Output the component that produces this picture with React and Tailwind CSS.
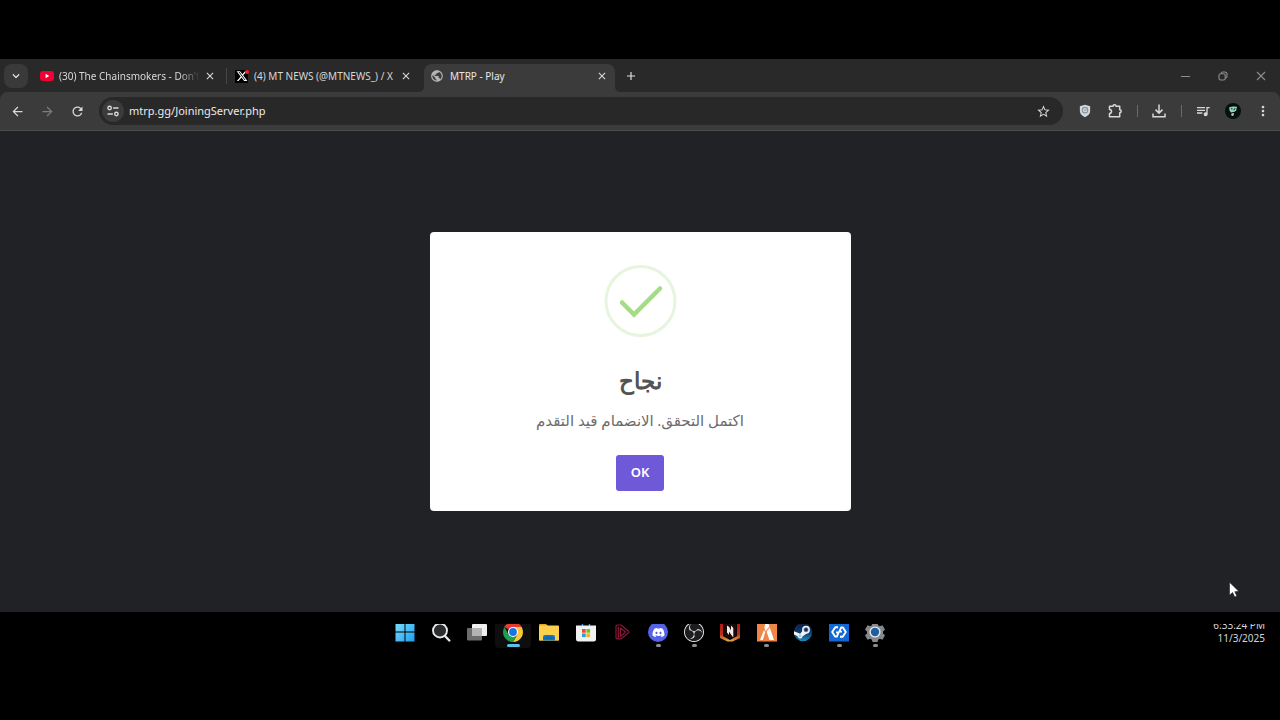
import React, { useState } from "react";
import {
  MdArrowBack,
  MdArrowForward,
  MdRefresh,
  MdStarBorder,
  MdQueueMusic,
  MdMoreVert,
  MdKeyboardArrowDown,
  MdClose,
  MdAdd,
  MdPublic,
} from "react-icons/md";
import { FaXTwitter, FaDiscord } from "react-icons/fa6";
import { SiObsstudio } from "react-icons/si";

// ---------- favicons and toolbar drawings ----------

const YoutubeIcon = () => (
  <svg viewBox="0 0 14 10" className="w-[14px] h-[10px] shrink-0">
    <rect width="14" height="10" rx="3" fill="#f00033" />
    <path d="M5.6 2.8 9.3 5 5.6 7.2z" fill="#fff" />
  </svg>
);

const XIcon = () => (
  <span className="relative flex h-[13px] w-[13px] shrink-0 items-center justify-center bg-black text-white">
    <FaXTwitter size={12} />
    <span className="absolute -right-px top-0 h-1 w-1 rounded-full bg-[#f4212e]" />
  </span>
);

const TuneIcon = () => (
  <svg viewBox="0 0 14 14" className="w-[14px] h-[14px]" fill="none" stroke="#d8d8d8" strokeWidth="1.4" strokeLinecap="round">
    <circle cx="3.6" cy="4" r="1.7" />
    <path d="M7.6 4h4.4M2 10h4.4" />
    <circle cx="10.4" cy="10" r="1.7" />
  </svg>
);

const ShieldIcon = () => (
  <svg viewBox="0 0 14 16" className="w-[12px] h-[14px]">
    <path d="M7 .8 13 2.5v5.3c0 3.6-2.6 6-6 7.6-3.4-1.6-6-4-6-7.6V2.5z" fill="#d3d8de" />
    <circle cx="7" cy="7" r="3.2" fill="none" stroke="#8793a0" strokeWidth="1.3" />
    <path d="M5.6 7h2.8M7.4 5.6 8.6 7" stroke="#8793a0" strokeWidth="1" fill="none" />
  </svg>
);

const PuzzleIcon = () => (
  <svg viewBox="0 0 16 16" className="w-4 h-4" fill="none" stroke="currentColor" strokeWidth="1.5" strokeLinejoin="round">
    <path d="M2.500 3.300H6C6 1.300 9 1.300 9 3.300H12.700V6.800C14.700 6.800 14.700 9.800 12.700 9.800V13.700H2.500V10.400C5.200 10.200 5.200 6.700 2.500 6.500z" />
  </svg>
);

const DownloadIcon = () => (
  <svg viewBox="0 0 14 14" className="h-[14px] w-[14px]" fill="none" stroke="currentColor" strokeWidth="1.5">
    <path d="M7 .5v8.500M3.500 5.600 7 9.100l3.500-3.500M1 9.500v3.300h12V9.500" />
  </svg>
);

const AvatarIcon = () => (
  <svg viewBox="0 0 16 16" className="w-4 h-4">
    <circle cx="8" cy="8" r="8" fill="#07100f" />
    <path d="M4.2 4.2 8 3.6l4 .2-.8 3.4-1.6 1.6-3.6.6-1.4-2z" fill="#8fd8c4" />
    <path d="M6.2 10.8 9 10l-.6 2.8H6.6z" fill="#b9e6da" />
    <path d="M6 5.8h1.6M8.800 7.200l1.400-2" stroke="#07100f" strokeWidth="1" />
  </svg>
);

const RestoreIcon = () => (
  <svg viewBox="0 0 10 10" className="w-[10px] h-[10px]" fill="none" stroke="#8e8e8e" strokeWidth="1.1">
    <rect x="1" y="2.8" width="6.2" height="6.2" rx="1.6" />
    <path d="M3 2.6C3.1 1.500 3.800 1 4.800 1H6.800C8.200 1 9 1.800 9 3.200V5.200C9 6.200 8.500 6.900 7.500 7" />
  </svg>
);

const Cursor = () => (
  <svg viewBox="0 0 12 18" className="absolute right-10 bottom-[13px] w-[12px] h-[18px]">
    <path d="M1.500 1.200V14.200L4.600 11.500 6.700 16 8.800 15 6.800 10.700 10.700 10.300z" fill="#fff" stroke="#222" strokeWidth=".6" />
  </svg>
);

// ---------- taskbar drawings, all on a 20x20 box ----------

const StartIcon = () => (
  <svg viewBox="0 0 20 20" className="w-5 h-5">
    <defs>
      <linearGradient id="start" x1="0" y1="0" x2="1" y2="1">
        <stop offset="0" stopColor="#7fdcfb" />
        <stop offset="1" stopColor="#1d9ff0" />
      </linearGradient>
    </defs>
    <path d="M.5.500h9v9h-9zM10.500.500h9v9h-9zM.500 10.500h9v9h-9zM10.500 10.500h9v9h-9z" fill="url(#start)" />
  </svg>
);

const SearchIcon = () => (
  <svg viewBox="0 0 20 20" className="w-5 h-5">
    <circle cx="9" cy="8.500" r="7" fill="#2b2d30" stroke="#e8e8e8" strokeWidth="1.900" />
    <path d="M14 14l4.300 4.500" stroke="#e8e8e8" strokeWidth="2.400" strokeLinecap="round" />
  </svg>
);

const TaskViewIcon = () => (
  <svg viewBox="0 0 20 20" className="w-5 h-5">
    <rect x="0" y="6" width="15" height="12.500" rx="1" fill="#6d6d6d" />
    <rect x="5" y="2" width="15" height="12" rx="1" fill="#f0f0f0" />
    <rect x="5" y="6" width="10" height="8" fill="#b4b4b4" />
  </svg>
);

const ChromeIcon = () => (
  <svg viewBox="0 0 20 20" className="w-5 h-5">
    <path d="M10 10 1.340 5A10 10 0 0 1 18.660 5z" fill="#e33b2e" />
    <path d="M10 10V5h8.660A10 10 0 0 1 10 20l4.330-7.500z" fill="#fcc934" />
    <path d="M10 10l4.330 2.500L10 20A10 10 0 0 1 1.340 5l4.330 7.500z" fill="#1e9e50" />
    <circle cx="10" cy="10" r="5" fill="#fff" />
    <circle cx="10" cy="10" r="3.900" fill="#1a73e8" />
  </svg>
);

const ExplorerIcon = () => (
  <svg viewBox="0 0 20 20" className="w-5 h-5">
    <path d="M0 3q0-1 1-1h6l2 2h10q1 0 1 1v13.500H0z" fill="#e8a818" />
    <rect x="0" y="3.500" width="20" height="15" rx="1" fill="#fbd04c" />
    <path d="M4 18.500V15q0-2 2-2h8q2 0 2 2v3.500z" fill="#1274c4" />
    <rect x="6" y="15.500" width="8" height="1" fill="#0c5a9c" />
  </svg>
);

const StoreIcon = () => (
  <svg viewBox="0 0 20 20" className="w-5 h-5">
    <path d="M6.500 4.500V2q0-1.200 1.200-1.200h4.600q1.200 0 1.200 1.200v2.500" fill="none" stroke="#2aa7e8" strokeWidth="1.400" />
    <path d="M0 3.500h20V17q0 2.500-2.500 2.500h-15Q0 19.500 0 17z" fill="#f1f1f1" />
    <path d="M6 7h3.700v3.700H6z" fill="#e8502c" />
    <path d="M10.400 7h3.700v3.700h-3.700z" fill="#7db928" />
    <path d="M6 11.400h3.700v3.700H6z" fill="#2a9fe5" />
    <path d="M10.400 11.400h3.700v3.700h-3.700z" fill="#f8b61c" />
  </svg>
);

const PlayerIcon = () => (
  <svg viewBox="0 0 20 20" className="w-5 h-5" fill="none" stroke="#8c1838" strokeWidth="1.200" strokeLinejoin="round">
    <path d="M4 4q0-1 1-1h4l7.200 6q1 1 0 2L9 16.800H5q-1 0-1-1z" />
    <path d="M6.300 16.500V4.500M8.400 6v8.500l5.200-4.500z" />
  </svg>
);

const DiscordIcon = () => (
  <span className="flex h-5 w-5 items-center justify-center rounded-full bg-[#5462e8] text-white">
    <FaDiscord size={13} />
  </span>
);

const ObsIcon = () => (
  <span className="flex h-5 w-5 items-center justify-center rounded-full bg-[#1d1d1f] text-[#e6e6e6]">
    <SiObsstudio size={20} />
  </span>
);

const NovaIcon = () => (
  <svg viewBox="0 0 20 20" className="w-5 h-5">
    <defs>
      <linearGradient id="nova" x1="0" y1="0" x2="0" y2="1">
        <stop offset="0" stopColor="#b3161b" />
        <stop offset=".6" stopColor="#b8321c" />
        <stop offset="1" stopColor="#e2b04a" />
      </linearGradient>
    </defs>
    <path d="M0 2h3v12l7 4 7-4V2h3v14L12.500 19.500h-5L0 16z" fill="url(#nova)" />
    <path d="M3.500 2h13v11.500L10 17l-6.500-3.500z" fill="#1b0809" />
    <path d="M7 3.500 9.200 5l1.800 3.500V3.500L13.300 6v9.500L11 12.500 9 9.500V13L7 10.500z" fill="#f2eeee" />
  </svg>
);

const FivemIcon = () => (
  <svg viewBox="0 0 20 20" className="w-5 h-5">
    <rect y="1" width="20" height="18.500" fill="#f08548" />
    <path d="M8.200 2h3.400l.8 2.400-3.900 4.800-1.100-4z" fill="#fff" />
    <path d="M7 8 8.200 10.500 5.800 18H3z" fill="#fff" />
    <path d="M9.600 9.400 12.800 5.500 17 18h-4.600z" fill="#fff" />
  </svg>
);

const SteamIcon = () => (
  <svg viewBox="0 0 20 20" className="w-5 h-5">
    <defs>
      <linearGradient id="steam" x1="0" y1="0" x2="0" y2="1">
        <stop offset="0" stopColor="#101a38" />
        <stop offset=".55" stopColor="#0d3f6e" />
        <stop offset="1" stopColor="#1a8fc4" />
      </linearGradient>
    </defs>
    <circle cx="10" cy="10" r="9.200" fill="url(#steam)" />
    <path d="M1 9.200 7.200 11.800 10 8.200 14.500 11 9.700 14.200Q8.800 17 6.300 16.200 4.600 15.500 4.400 14L1 12.500z" fill="#f2f5f8" />
    <circle cx="13" cy="7.700" r="3.900" fill="#f2f5f8" />
    <circle cx="13" cy="7.700" r="2.200" fill="#14335c" stroke="#8aa0b5" strokeWidth=".6" />
    <circle cx="7" cy="13.700" r="1.500" fill="#b8c8d6" />
  </svg>
);

const LinkIcon = () => (
  <svg viewBox="0 0 20 20" className="w-5 h-5">
    <rect y="1" width="20" height="18.500" fill="#1268d4" />
    <g fill="none" stroke="#fff" strokeWidth="1.900" strokeLinejoin="round">
      <path d="M9 5.200H6.300L3.200 10l2.900 4.600h1.700L9.600 10.400H7" />
      <path d="M11 14.800h2.700l3.100-4.800-2.900-4.600h-1.700L10.400 9.600H13" />
    </g>
  </svg>
);

const SettingsIcon = () => (
  <svg viewBox="0 0 20 20" className="w-5 h-5">
    <path d="M7.500.500h5l.6 2.700 1.700 1 2.700-.9L20 7.700l-2 1.900v1.800l2 1.900-2.500 4.400-2.700-.9-1.700 1-.6 2.200h-5l-.6-2.200-1.700-1-2.700.9L0 13.300l2-1.900V9.600L0 7.700l2.500-4.400 2.700.9 1.700-1z" fill="#85898d" />
    <circle cx="10" cy="10" r="5.600" fill="#e4e8ec" />
    <circle cx="10" cy="10" r="4.200" fill="#1f5f9c" />
  </svg>
);

const apps = [
  { name: "Start", icon: StartIcon },
  { name: "Search", icon: SearchIcon },
  { name: "Task view", icon: TaskViewIcon },
  { name: "Chrome", icon: ChromeIcon, active: true },
  { name: "File Explorer", icon: ExplorerIcon },
  { name: "Store", icon: StoreIcon },
  { name: "Player", icon: PlayerIcon },
  { name: "Discord", icon: DiscordIcon, running: true },
  { name: "OBS", icon: ObsIcon, running: true },
  { name: "Nova", icon: NovaIcon },
  { name: "FiveM", icon: FivemIcon, running: true },
  { name: "Steam", icon: SteamIcon },
  { name: "Link", icon: LinkIcon, running: true },
  { name: "Settings", icon: SettingsIcon, running: true },
];

const CloseTab = () => (
  <button type="button" aria-label="Close tab" className="flex h-4 w-4 shrink-0 items-center justify-center text-[#dedede]">
    <MdClose size={12} />
  </button>
);

const TabStrip = () => (
  <div className="flex h-[33px] items-start bg-[#292929] pt-[5px] text-[10px] text-[#d8d8d8]">
    <button
      type="button"
      aria-label="Search tabs"
      className="ml-1 flex h-6 w-6 shrink-0 items-center justify-center rounded-lg bg-[#3a3a3a] text-white"
    >
      <MdKeyboardArrowDown size={14} />
    </button>

    <div className="ml-3 flex h-6 w-[178px] items-center">
      <YoutubeIcon />
      <span className="ml-[5px] mr-[2px] flex-1 whitespace-nowrap [mask-image:linear-gradient(to_right,black_85%,transparent)]">
        (30) The Chainsmokers - Don't
      </span>
      <CloseTab />
    </div>
    <span className="mx-2 mt-1 h-4 w-px bg-[#454545]" />

    <div className="flex h-6 w-[179px] items-center">
      <XIcon />
      <span className="ml-[6px] flex-1 whitespace-nowrap">(4) MT NEWS (@MTNEWS_) / X</span>
      <CloseTab />
    </div>

    <div className="relative ml-[10px] h-7 w-[191px] rounded-t-lg bg-[#3b3b3b] pl-[6px] pr-[5px] text-[#e8e8e8]">
      {/* curved feet of the active tab */}
      <svg viewBox="0 0 6 6" className="absolute -left-[6px] bottom-0 h-[6px] w-[6px]">
        <path d="M6 0v6H0q6 0 6-6z" fill="#3b3b3b" />
      </svg>
      <svg viewBox="0 0 6 6" className="absolute -right-[6px] bottom-0 h-[6px] w-[6px]">
        <path d="M0 0v6h6q-6 0-6-6z" fill="#3b3b3b" />
      </svg>
      <div className="flex h-6 items-center">
        <MdPublic size={14} className="text-[#b4b4b4]" />
        <span className="ml-[6px] flex-1">MTRP - Play</span>
        <CloseTab />
      </div>
    </div>

    <button type="button" aria-label="New tab" className="ml-1 flex h-6 w-6 items-center justify-center text-[#e0e0e0]">
      <MdAdd size={14} />
    </button>

    <div className="ml-auto flex h-6 text-[#8e8e8e]">
      <button type="button" aria-label="Minimize" className="flex w-[38px] items-center justify-center">
        <span className="h-px w-[9px] bg-[#8e8e8e]" />
      </button>
      <button type="button" aria-label="Restore" className="flex w-[38px] items-center justify-center">
        <RestoreIcon />
      </button>
      <button type="button" aria-label="Close" className="flex w-[38px] items-center justify-center">
        <svg viewBox="0 0 10 10" className="h-[10px] w-[10px]" stroke="#8e8e8e" strokeWidth="1.1">
          <path d="M1 1l8 8M9 1 1 9" />
        </svg>
      </button>
    </div>
  </div>
);

const ToolButton = ({ label, className = "text-[#d8d8d8]", children }) => (
  <button type="button" aria-label={label} className={`flex h-7 w-[30px] shrink-0 items-center justify-center ${className}`}>
    {children}
  </button>
);

const Divider = () => (
  <span className="flex w-[14px] shrink-0 justify-center">
    <span className="h-3 w-px bg-[#6a6a6a]" />
  </span>
);

const Toolbar = () => {
  const [url, setUrl] = useState("mtrp.gg/JoiningServer.php");

  return (
    <div className="bg-[#292929]">
      <div className="flex h-[39px] items-center rounded-t-lg border-b border-[#4c4c4c] bg-[#3b3b3b] px-[2px]">
        <ToolButton label="Back"><MdArrowBack size={15} /></ToolButton>
        <ToolButton label="Forward" className="text-[#7c7c7c]"><MdArrowForward size={15} /></ToolButton>
        <ToolButton label="Reload"><MdRefresh size={15} /></ToolButton>

        <div className="mx-[7px] flex h-7 flex-1 items-center rounded-full bg-[#282828] pl-[3px] pr-3">
          <button type="button" aria-label="Site information" className="flex h-[22px] w-[22px] items-center justify-center rounded-full bg-[#3b3b3b]">
            <TuneIcon />
          </button>
          <input
            type="text"
            aria-label="Address"
            value={url}
            onChange={(e) => setUrl(e.target.value)}
            className="ml-[5px] min-w-0 flex-1 bg-transparent text-[11px] text-[#ebebeb] outline-none"
          />
          <button type="button" aria-label="Bookmark" className="text-[#d8d8d8]">
            <MdStarBorder size={15} />
          </button>
        </div>

        <ToolButton label="Shield"><ShieldIcon /></ToolButton>
        <ToolButton label="Extensions"><PuzzleIcon /></ToolButton>
        <Divider />
        <ToolButton label="Downloads"><DownloadIcon /></ToolButton>
        <Divider />
        <ToolButton label="Media"><MdQueueMusic size={16} /></ToolButton>
        <ToolButton label="Profile"><AvatarIcon /></ToolButton>
        <ToolButton label="Menu"><MdMoreVert size={16} /></ToolButton>
      </div>
    </div>
  );
};

const SuccessDialog = ({ onClose }) => (
  <div role="dialog" aria-labelledby="title" className="flex w-[421px] max-w-full flex-col items-center rounded-[4px] bg-white pt-[33px] pb-5">
    <svg viewBox="0 0 73 73" className="h-[73px] w-[73px]" fill="none">
      <circle cx="36.5" cy="36" r="34.500" stroke="#e6f5dd" strokeWidth="3" />
      <path d="M18 37.500 30 49.500 56 23.500" stroke="#a5dc86" strokeWidth="4.500" strokeLinecap="round" />
    </svg>
    <h2 id="title" dir="rtl" lang="ar" className="mt-[27px] font-['Open_Sans','Noto_Sans',sans-serif] text-[23px] leading-[30px] font-semibold text-[#545454]">
      نجاح
    </h2>
    <p dir="rtl" lang="ar" className="mt-[15px] font-['Lato','DejaVu_Sans',sans-serif] text-[15px] leading-5 text-[#6c6c6c]">
      اكتمل التحقق. الانضمام قيد التقدم
    </p>
    <button
      type="button"
      onClick={onClose}
      className="mt-[25px] h-9 w-12 rounded-[3px] bg-[#7059d8] text-[13px] font-semibold text-white"
    >
      OK
    </button>
  </div>
);

const Taskbar = () => (
  <footer className="grid h-[108px] grid-cols-[1fr_auto_1fr] items-start bg-black pt-3">
    <span />
    <div className="h-6 w-[507px] overflow-hidden">
      <nav className="-mt-1 flex justify-between">
        {apps.map(({ name, icon: Icon, active, running }) => (
          <button
            key={name}
            type="button"
            aria-label={name}
            className={`flex h-7 w-9 flex-col items-center rounded pt-[2px] ${active ? "bg-[#0e0e0e]" : ""}`}
          >
            <Icon />
            {active && <span className="mt-[2px] h-[3px] w-[13px] rounded-full bg-[#5cc0ee]" />}
            {running && <span className="mt-[2px] h-[3px] w-[5px] rounded-full bg-[#8f8f8f]" />}
          </button>
        ))}
      </nav>
    </div>
    <div className="h-6 justify-self-end overflow-hidden pr-[15px]">
      <div className="-mt-[5px] text-right text-[10px] leading-[13px] text-[#d6d6d6]">
        <p>6:33:24 PM</p>
        <p>11/3/2025</p>
      </div>
    </div>
  </footer>
);

const App = () => {
  const [open, setOpen] = useState(true);

  return (
    <div className="flex min-h-screen flex-col bg-black pt-[59px] font-['Noto_Sans','DejaVu_Sans',sans-serif]">
      <header>
        <TabStrip />
        <Toolbar />
      </header>
      <main className="relative flex flex-1 items-center justify-center bg-[#212225]">
        {open && <SuccessDialog onClose={() => setOpen(false)} />}
        <Cursor />
      </main>
      <Taskbar />
    </div>
  );
};

export default App;
